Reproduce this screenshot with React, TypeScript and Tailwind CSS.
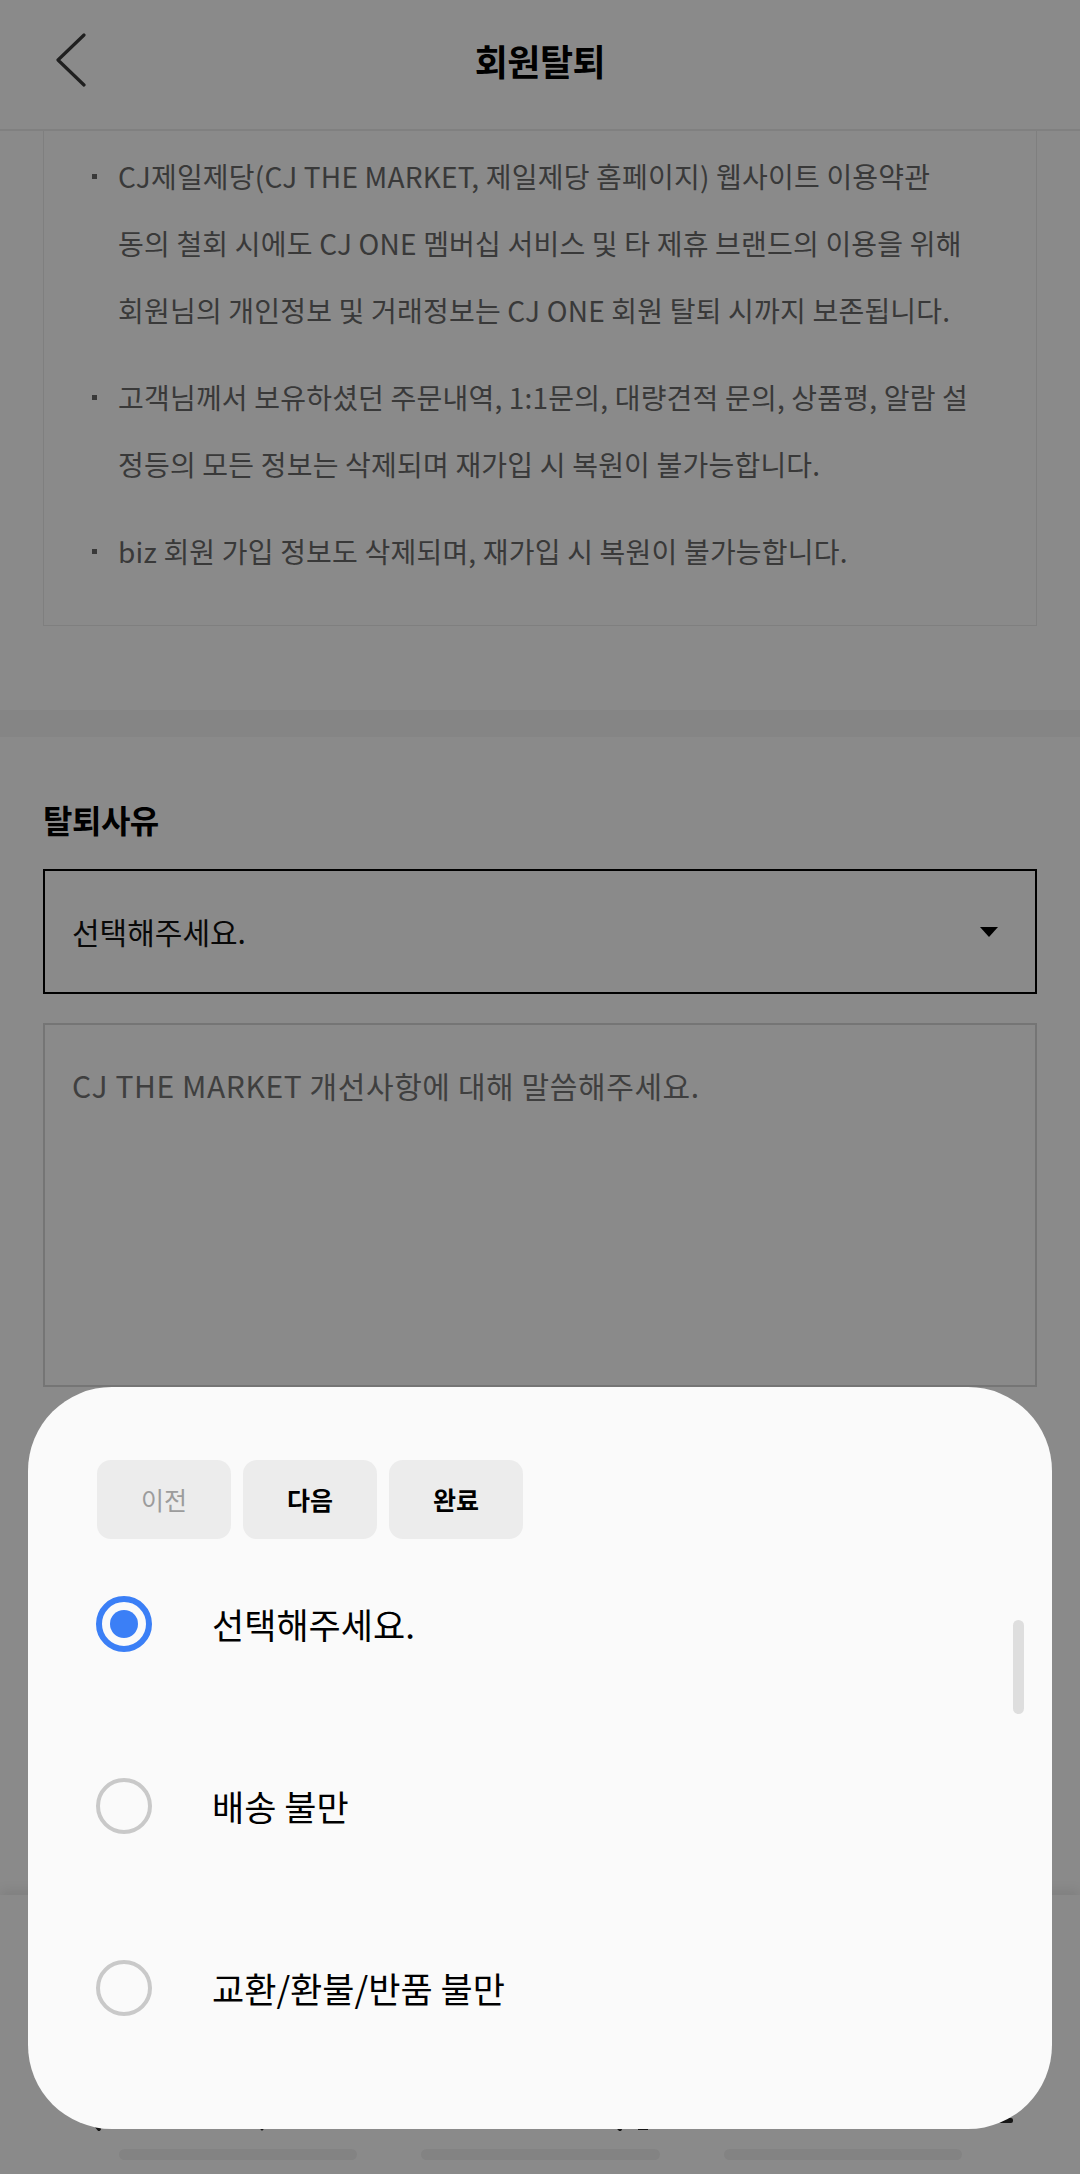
import React from "react";

function Radio({ checked }: { checked: boolean }) {
  if (checked) {
    return (
      <div className="flex h-[56px] w-[56px] shrink-0 items-center justify-center rounded-full border-[6px] border-[#3b7ff6]">
        <div className="h-[28px] w-[28px] rounded-full bg-[#3b7ff6]" />
      </div>
    );
  }
  return <div className="h-[56px] w-[56px] shrink-0 rounded-full border-[4px] border-[#c9c9c9]" />;
}

function Bullet({ lines }: { lines: string[] }) {
  return (
    <li className="flex">
      <div className="relative w-[26px] shrink-0">
        <div className="absolute left-0 top-[31px] h-[5px] w-[5px] bg-[#6a6a6a]" />
      </div>
      <div className="text-[28px] leading-[67px] tracking-[0.2px] text-[#6a6a6a]">
        {lines.map((l, i) => (
          <div key={i} className="whitespace-nowrap">
            {l}
          </div>
        ))}
      </div>
    </li>
  );
}

export default function App() {
  return (
    <div className="relative h-[2174px] w-[1080px] overflow-hidden bg-white font-['Noto_Sans_CJK_KR','Noto_Sans',sans-serif] text-black">
      {/* Header */}
      <header className="grid h-[131px] grid-cols-[1fr_auto_1fr] items-center border-b-[2px] border-[#ececec] pb-[10px]">
        <div className="pl-[54px]">
          <svg width="34" height="54" viewBox="0 0 34 54" fill="none">
            <path d="M30 2 L4 27 L30 52" stroke="#3a3a3a" strokeWidth="3.2" strokeLinecap="round" strokeLinejoin="round" />
          </svg>
        </div>
        <h1 className="text-[36px] font-bold leading-none tracking-[-0.5px]">회원탈퇴</h1>
        <div />
      </header>

      {/* Notice box */}
      <div className="px-[43px]">
        <div className="border border-t-0 border-[#ebebeb] pb-[40px] pl-[48px] pt-[12px]">
          <ul className="flex flex-col gap-[20px]">
            <Bullet
              lines={[
                "CJ제일제당(CJ THE MARKET, 제일제당 홈페이지) 웹사이트 이용약관",
                "동의 철회 시에도 CJ ONE 멤버십 서비스 및 타 제휴 브랜드의 이용을 위해",
                "회원님의 개인정보 및 거래정보는 CJ ONE 회원 탈퇴 시까지 보존됩니다.",
              ]}
            />
            <Bullet
              lines={[
                "고객님께서 보유하셨던 주문내역, 1:1문의, 대량견적 문의, 상품평, 알람 설",
                "정등의 모든 정보는 삭제되며 재가입 시 복원이 불가능합니다.",
              ]}
            />
            <Bullet lines={["biz 회원 가입 정보도 삭제되며, 재가입 시 복원이 불가능합니다."]} />
          </ul>
        </div>
      </div>

      {/* Divider band */}
      <div className="mt-[84px] h-[27px] bg-[#f6f6f6]" />

      {/* Reason section */}
      <section className="px-[43px] pt-[62px]">
        <h2 className="h-[40px] text-[32px] font-bold leading-[40px] tracking-[-0.5px]">탈퇴사유</h2>
        <div className="mt-[30px] flex h-[125px] items-center justify-between border-[2px] border-black pl-[27px] pr-[36px]">
          <span className="text-[30px] text-[#111]">선택해주세요.</span>
          <svg width="20" height="12" viewBox="0 0 20 12">
            <path d="M1 1 L19 1 L10 11 Z" fill="#000" />
          </svg>
        </div>
        <div className="mt-[29px] h-[364px] border-[2px] border-[#d9d9d9] pl-[27px] pt-[38px]">
          <span className="text-[30px] tracking-[0.6px] text-[#757575]">CJ THE MARKET 개선사항에 대해 말씀해주세요.</span>
        </div>
      </section>

      {/* Bottom bar (behind the dim) */}
      <div className="absolute bottom-0 left-0 right-0 top-[1895px] flex flex-col justify-end bg-white pb-[14px] shadow-[0_-6px_10px_rgba(0,0,0,0.07)]">
        <svg className="absolute left-0 top-[220px]" width="1080" height="20" viewBox="0 0 1080 20">
          <path d="M90 3 L99 14" stroke="#2a2a2a" strokeWidth="4" strokeLinecap="round" />
          <path d="M264 8 L262 14" stroke="#2a2a2a" strokeWidth="3" strokeLinecap="round" />
          <rect x="427" y="8" width="45" height="5" rx="2" fill="#2a2a2a" />
          <path d="M613 7 L620 14" stroke="#2a2a2a" strokeWidth="4" strokeLinecap="round" />
          <rect x="638" y="6" width="10" height="9" fill="#2a2a2a" />
          <rect x="789" y="8" width="36" height="5" rx="2" fill="#2a2a2a" />
          <rect x="982" y="3" width="31" height="5" rx="2" fill="#2a2a2a" />
        </svg>
        <div className="flex justify-center gap-[64px]">
          <div className="h-[11px] w-[238px] rounded-full bg-[#f2f2f2]" />
          <div className="h-[11px] w-[239px] rounded-full bg-[#f2f2f2]" />
          <div className="h-[11px] w-[238px] rounded-full bg-[#f2f2f2]" />
        </div>
      </div>

      {/* Dim overlay */}
      <div className="absolute inset-0 bg-[rgba(0,0,0,0.46)]" />

      {/* Bottom sheet picker */}
      <div className="absolute left-[28px] top-[1387px] h-[742px] w-[1024px] rounded-[84px] bg-[#fafafa] pl-[68px] pt-[73px]">
        <div className="flex gap-[12px] pl-[1px]">
          <div className="flex h-[79px] w-[134px] items-center justify-center rounded-[14px] bg-[#ececec] text-[25px] text-[#9c9c9c]">
            이전
          </div>
          <div className="flex h-[79px] w-[134px] items-center justify-center rounded-[14px] bg-[#ececec] text-[25px] font-bold text-black">
            다음
          </div>
          <div className="flex h-[79px] w-[134px] items-center justify-center rounded-[14px] bg-[#ececec] text-[25px] font-bold text-black">
            완료
          </div>
        </div>
        <div className="mt-[-6px]">
          {[
            { label: "선택해주세요.", checked: true },
            { label: "배송 불만", checked: false },
            { label: "교환/환불/반품 불만", checked: false },
          ].map((o) => (
            <div key={o.label} className="flex h-[182px] items-center">
              <Radio checked={o.checked} />
              <span className="ml-[60px] text-[35px] text-black">{o.label}</span>
            </div>
          ))}
        </div>
        <div className="absolute left-[985px] top-[233px] h-[94px] w-[11px] rounded-full bg-[#dedede]" />
      </div>
    </div>
  );
}
